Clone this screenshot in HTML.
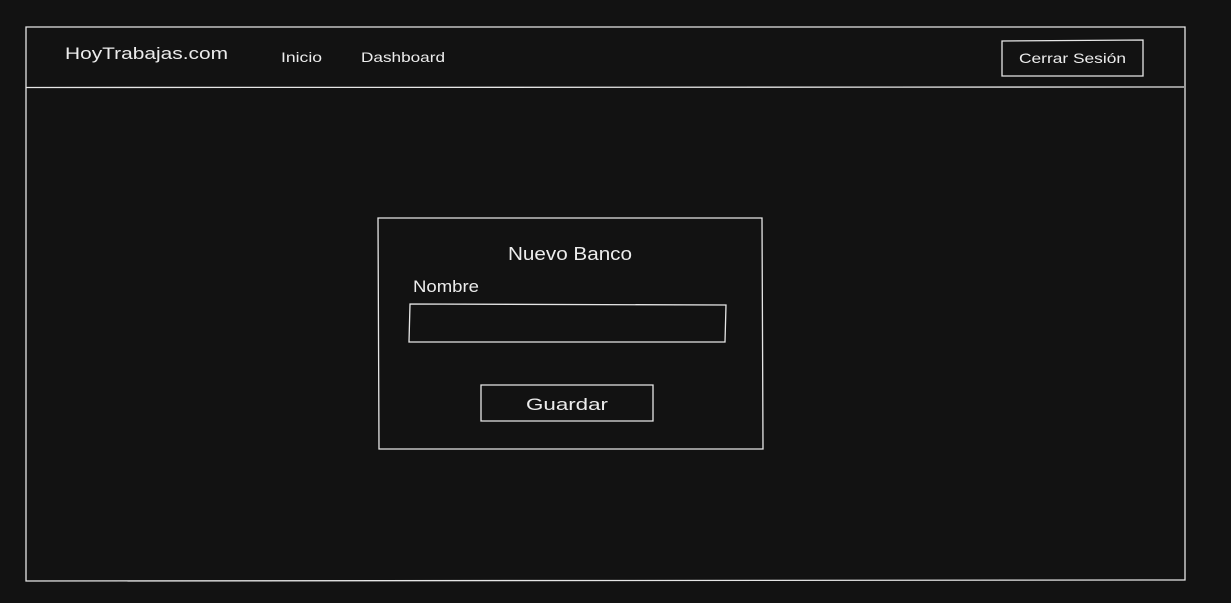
<!DOCTYPE html>
<html><head><meta charset="utf-8"><style>
html,body{margin:0;padding:0;background:#121212;width:1231px;height:603px;overflow:hidden}
svg{display:block}
text{font-family:"Liberation Sans",sans-serif;fill:#ececec}
</style></head><body>
<svg width="1231" height="603" viewBox="0 0 1231 603">
<g fill="none" stroke="#e6e6e6" stroke-width="1.3">
<path d="M26 27 L1185 27 L1185 580 L26 581 Z"/>
<path d="M26 87.5 L1184 87"/>
<path d="M1002 41 L1143 40 L1143 76 L1002 76 Z"/>
<path d="M378 218 L762 218 L763 449 L379 449 Z"/>
<path d="M410 304 L726 305 L725 342 L409 342 Z"/>
<path d="M481 385 L653 385 L653 421 L481 421 Z"/>
</g>
<text x="65" y="59" font-size="17" textLength="163" lengthAdjust="spacingAndGlyphs">HoyTrabajas.com</text>
<text x="281" y="62" font-size="14" textLength="41" lengthAdjust="spacingAndGlyphs">Inicio</text>
<text x="361" y="62" font-size="14" textLength="84" lengthAdjust="spacingAndGlyphs">Dashboard</text>
<text x="1019" y="63" font-size="14" textLength="107" lengthAdjust="spacingAndGlyphs">Cerrar Sesión</text>
<text x="508" y="260" font-size="18" textLength="124" lengthAdjust="spacingAndGlyphs">Nuevo Banco</text>
<text x="413" y="292" font-size="17" textLength="66" lengthAdjust="spacingAndGlyphs">Nombre</text>
<text x="526" y="410" font-size="17" textLength="82" lengthAdjust="spacingAndGlyphs">Guardar</text>
</svg>
</body></html>
